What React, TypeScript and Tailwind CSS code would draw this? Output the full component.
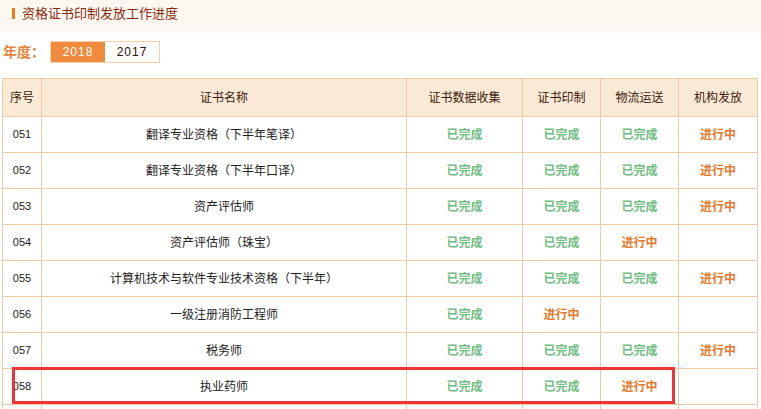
import React from "react";

type Row = { no: string; name: string; s: (0 | 1 | 2)[]; hl?: boolean };

const rows: Row[] = [
  { no: "051", name: "翻译专业资格（下半年笔译）", s: [1, 1, 1, 2] },
  { no: "052", name: "翻译专业资格（下半年口译）", s: [1, 1, 1, 2] },
  { no: "053", name: "资产评估师", s: [1, 1, 1, 2] },
  { no: "054", name: "资产评估师（珠宝）", s: [1, 1, 2, 0] },
  { no: "055", name: "计算机技术与软件专业技术资格（下半年）", s: [1, 1, 1, 2] },
  { no: "056", name: "一级注册消防工程师", s: [1, 2, 0, 0] },
  { no: "057", name: "税务师", s: [1, 1, 1, 2] },
  { no: "058", name: "执业药师", s: [1, 1, 2, 0], hl: true },
  { no: "", name: "", s: [0, 0, 0, 0] },
];

function Status({ v }: { v: 0 | 1 | 2 }) {
  if (v === 1) return <span className="font-bold text-[#72bd84]">已完成</span>;
  if (v === 2) return <span className="font-bold text-[#e57a2c]">进行中</span>;
  return null;
}

export default function App() {
  return (
    <div
      className="relative w-[761px] h-[409px] overflow-hidden bg-white text-[12px] text-[#222]"
      style={{ fontFamily: '"Liberation Sans", "Noto Sans CJK SC", sans-serif' }}
    >
      <div className="h-[26px] bg-[#fdf7f2] flex items-center pl-[12px]">
        <span className="w-[3px] h-[11px] bg-[#f07a12] mr-[7px]" />
        <span className="text-[13px] text-[#8a2a0e] leading-none">资格证书印制发放工作进度</span>
      </div>
      <div className="h-[15px] bg-gradient-to-b from-[#fdf6f0] to-white" />
      <div className="flex items-center h-[22px] pl-[3px]">
        <span className="text-[14px] font-bold text-[#e5843c] w-[47px]">年度：</span>
        <div className="flex border border-[#f2cfae] h-[22px]">
          <div className="w-[54px] bg-[#f08a3c] text-white flex items-center justify-center tracking-[1px]">2018</div>
          <div className="w-[54px] bg-white text-[#2a0c0c] flex items-center justify-center tracking-[1px]">2017</div>
        </div>
      </div>
      <div className="pl-[2px] pt-[15px]">
        <table className="border-collapse table-fixed w-[755px]">
          <colgroup>
            <col className="w-[39px]" />
            <col className="w-[365px]" />
            <col className="w-[116px]" />
            <col className="w-[78px]" />
            <col className="w-[78px]" />
            <col className="w-[79px]" />
          </colgroup>
          <thead>
            <tr className="h-[38px] bg-[#fae9d5] text-[#3a1a0c]">
              {["序号", "证书名称", "证书数据收集", "证书印制", "物流运送", "机构发放"].map((h) => (
                <th key={h} className="border border-[#edc9a6] font-normal text-center">
                  {h}
                </th>
              ))}
            </tr>
          </thead>
          <tbody>
            {rows.map((r, idx) => (
              <tr key={idx} className="h-[36px]">
                <td className="border border-[#edc9a6] text-[11px] text-[#222] text-center">{r.no}</td>
                <td className="border border-[#edc9a6] text-center">{r.name}</td>
                {r.s.map((v, i) => (
                  <td key={i} className="border border-[#edc9a6] text-center">
                    <Status v={v} />
                  </td>
                ))}
              </tr>
            ))}
          </tbody>
        </table>
      </div>
      <div className="absolute left-[12px] top-[367px] w-[663px] h-[37px] border-[3px] border-[#f03434]" />
    </div>
  );
}
